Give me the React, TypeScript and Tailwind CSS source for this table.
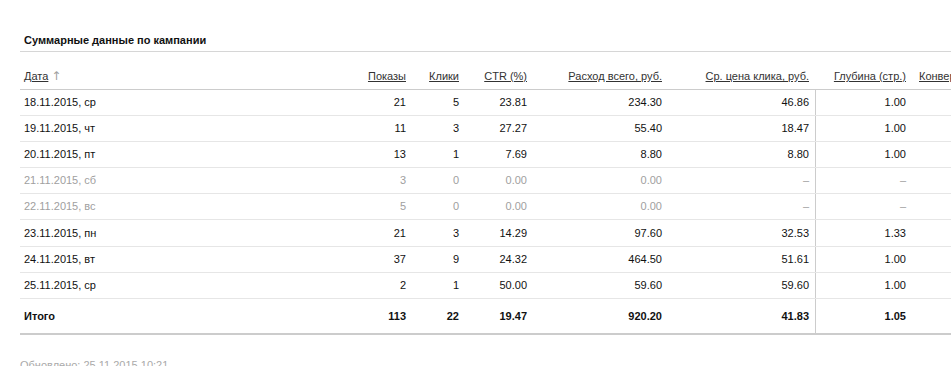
import React from "react";

type Row = { d: string; s: string; c: string; ctr: string; r: string; p: string; g: string; muted?: boolean; h: string };

const rows: Row[] = [
  { d: "18.11.2015, ср", s: "21", c: "5", ctr: "23.81", r: "234.30", p: "46.86", g: "1.00", h: "h-[26px]" },
  { d: "19.11.2015, чт", s: "11", c: "3", ctr: "27.27", r: "55.40", p: "18.47", g: "1.00", h: "h-[26px]" },
  { d: "20.11.2015, пт", s: "13", c: "1", ctr: "7.69", r: "8.80", p: "8.80", g: "1.00", h: "h-[26px]" },
  { d: "21.11.2015, сб", s: "3", c: "0", ctr: "0.00", r: "0.00", p: "–", g: "–", muted: true, h: "h-[26px]" },
  { d: "22.11.2015, вс", s: "5", c: "0", ctr: "0.00", r: "0.00", p: "–", g: "–", muted: true, h: "h-[26px]" },
  { d: "23.11.2015, пн", s: "21", c: "3", ctr: "14.29", r: "97.60", p: "32.53", g: "1.33", h: "h-[27px]" },
  { d: "24.11.2015, вт", s: "37", c: "9", ctr: "24.32", r: "464.50", p: "51.61", g: "1.00", h: "h-[26px]" },
  { d: "25.11.2015, ср", s: "2", c: "1", ctr: "50.00", r: "59.60", p: "59.60", g: "1.00", h: "h-[26px]" },
];

export default function App() {
  return (
    <div
      className="w-[951px] h-[366px] overflow-hidden bg-white text-[11px] leading-[13px] text-[#111]"
      style={{ fontFamily: '"Liberation Sans", Arial, sans-serif' }}
    >
      <div className="ml-[20px] w-[1020px]">
        <div className="mt-[32px] pl-[4px] pb-[3px] leading-[16px] font-bold text-[#111] border-b border-[#d6d6d6]">
          Суммарные данные по кампании
        </div>

        {/* header */}
        <div className="flex h-[38px] items-end pb-[6px] border-b border-[#cccccc] text-[#333]">
          <div className="w-[320px] pl-[4px] flex items-end">
            <span className="underline">Дата</span>
            <span className="text-[#a0a0a0] ml-[3px] text-[12px] leading-[13px]" style={{ fontFamily: '"DejaVu Sans", sans-serif' }}>↑</span>
          </div>
          <div className="w-[72px] pr-[6px] text-right"><span className="underline">Показы</span></div>
          <div className="w-[53px] pr-[6px] text-right"><span className="underline">Клики</span></div>
          <div className="w-[68px] pr-[6px] text-right"><span className="underline">CTR (%)</span></div>
          <div className="w-[135px] pr-[6px] text-right"><span className="underline">Расход всего, руб.</span></div>
          <div className="w-[148px] pr-[7px] text-right"><span className="underline">Ср. цена клика, руб.</span></div>
          <div className="w-[96px] pr-[6px] text-right"><span className="underline">Глубина (стр.)</span></div>
          <div className="pl-[7px] whitespace-nowrap"><span className="underline">Конверсия (%)</span></div>
        </div>

        {rows.map((r) => (
          <div
            key={r.d}
            className={`flex items-center ${r.h} border-b border-[#e6e6e6] ${r.muted ? "text-[#a0a0a0]" : "text-[#111]"}`}
          >
            <div className="w-[320px] pl-[4px]">{r.d}</div>
            <div className="w-[72px] pr-[6px] text-right">{r.s}</div>
            <div className="w-[53px] pr-[6px] text-right">{r.c}</div>
            <div className="w-[68px] pr-[6px] text-right">{r.ctr}</div>
            <div className="w-[135px] pr-[6px] text-right">{r.r}</div>
            <div className="w-[148px] h-full flex items-center justify-end pr-[6px] border-r border-[#cccccc]">{r.p}</div>
            <div className="w-[96px] pr-[6px] text-right">{r.g}</div>
            <div className="pl-[7px]"></div>
          </div>
        ))}

        <div className="flex items-center h-[36px] border-b-2 border-[#cccccc] font-bold text-[#111]">
          <div className="w-[320px] pl-[4px]">Итого</div>
          <div className="w-[72px] pr-[6px] text-right">113</div>
          <div className="w-[53px] pr-[6px] text-right">22</div>
          <div className="w-[68px] pr-[6px] text-right">19.47</div>
          <div className="w-[135px] pr-[6px] text-right">920.20</div>
          <div className="w-[148px] h-full flex items-center justify-end pr-[6px] border-r border-[#cccccc]">41.83</div>
          <div className="w-[96px] pr-[6px] text-right">1.05</div>
          <div className="pl-[7px]"></div>
        </div>

        <div className="mt-[24px] text-[#aaaaaa]">Обновлено: 25.11.2015 10:21</div>
      </div>
    </div>
  );
}
